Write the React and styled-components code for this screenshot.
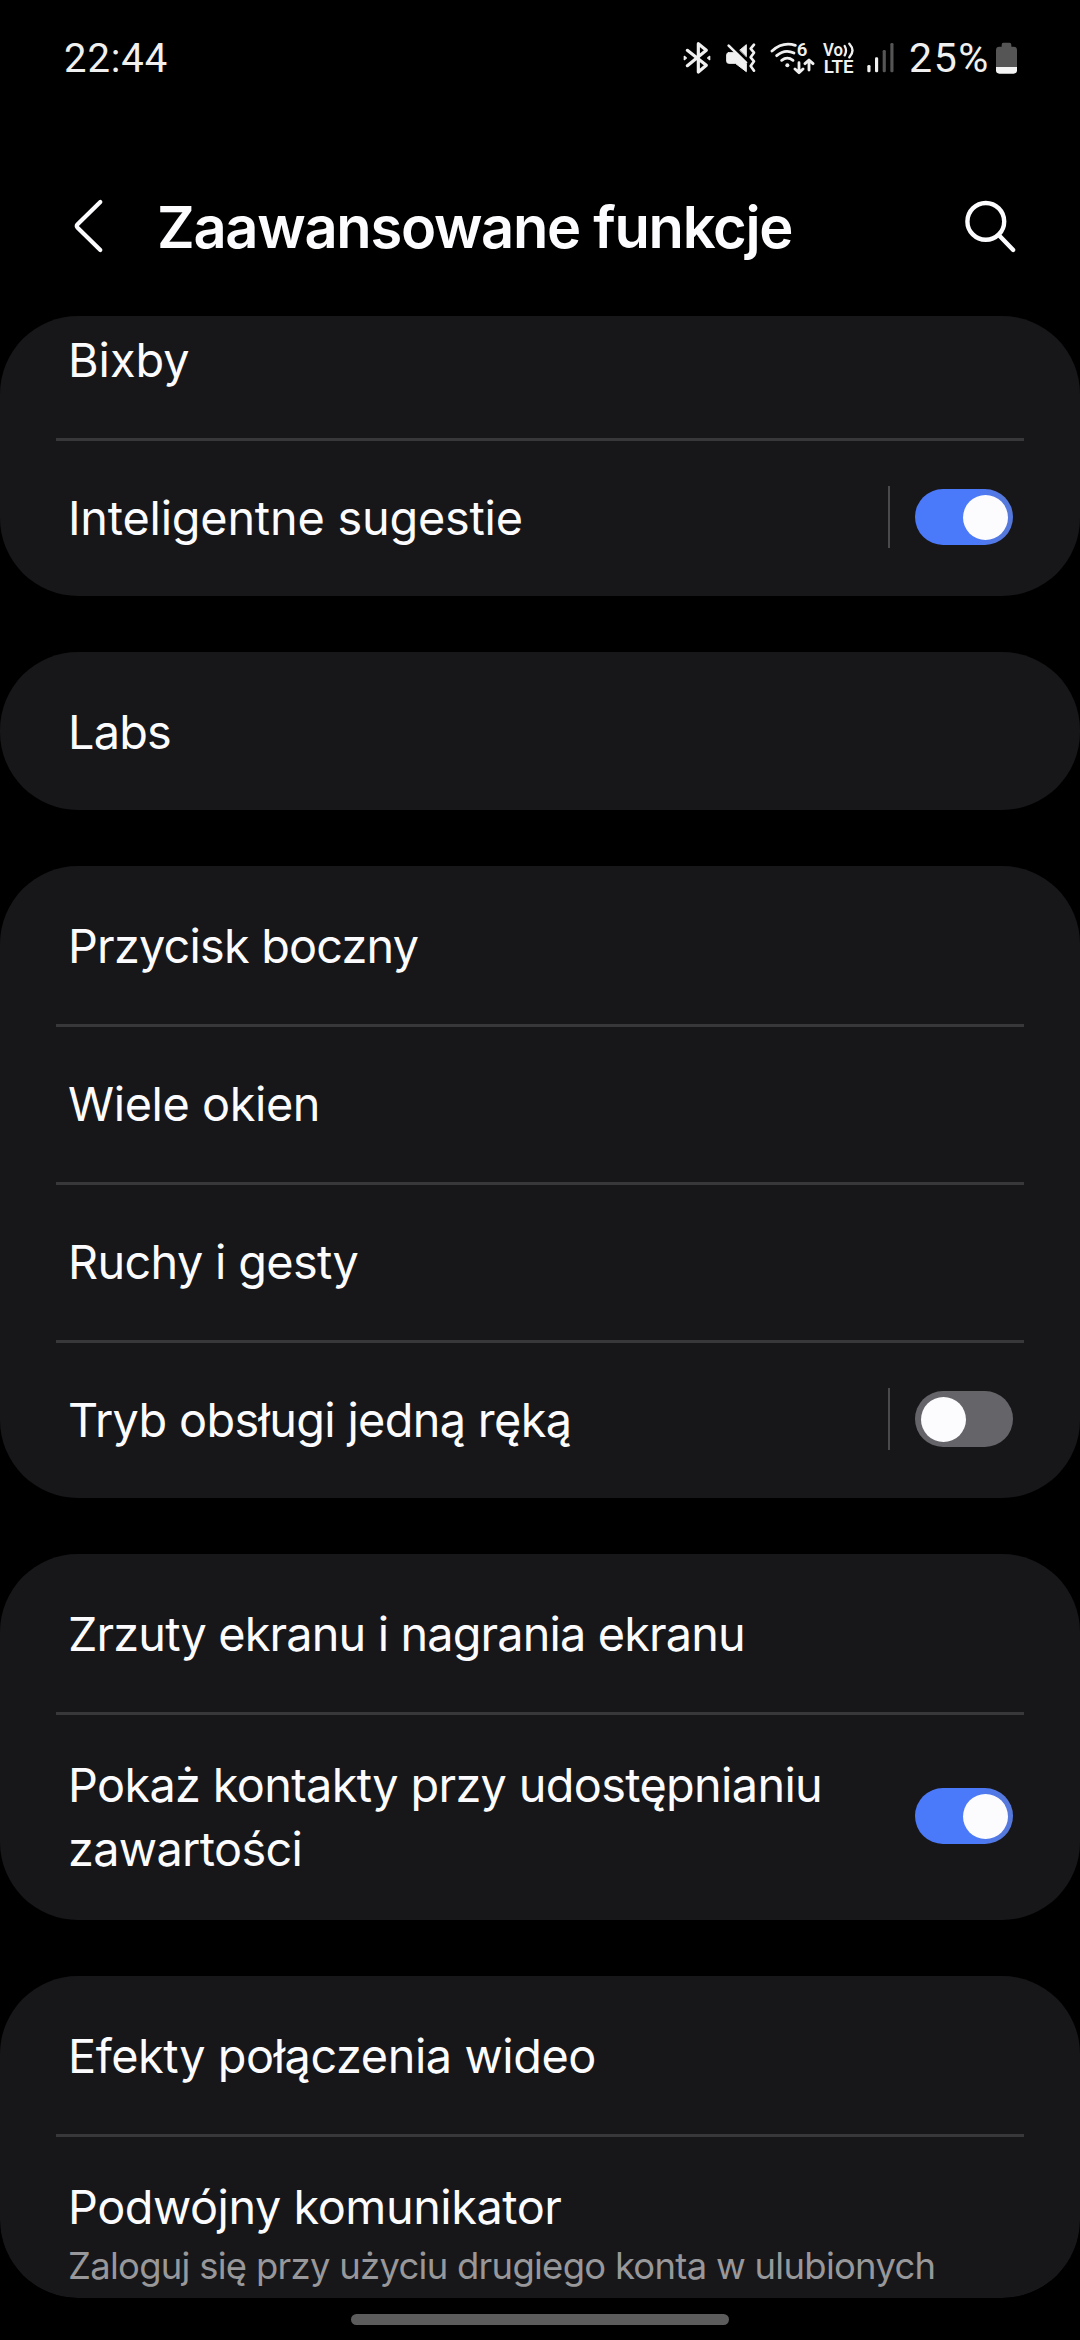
import React, { useState } from 'react';
import styled, { createGlobalStyle } from 'styled-components';

const GlobalStyle = createGlobalStyle`
	* {
		box-sizing: border-box;
	}
	body {
		margin: 0;
		background: #000;
	}
`;

const Screen = styled.div`
	display: flex;
	flex-direction: column;
	width: 1080px;
	height: 2340px;
	overflow: hidden;
	background: #000;
	color: #fcfcff;
	font-family: Inter, 'Liberation Sans', sans-serif;
`;

const StatusBar = styled.div`
	display: flex;
	align-items: center;
	justify-content: space-between;
	height: 116px;
	padding: 0 62px 0 64px;
	color: #f0f0f0;
	font-family: Roboto, 'Liberation Sans', sans-serif;
`;

const Clock = styled.div`
	font-size: 40px;
	letter-spacing: 0.9px;
`;

const StatusIcons = styled.div`
	display: flex;
	align-items: center;

	svg {
		display: block;
		height: 36px;
	}
`;

const BatteryText = styled.div`
	margin: 0 6px 0 15px;
	width: 80px;
	font-size: 41px;
	letter-spacing: 1.6px;
	white-space: nowrap;
`;

const Gap = styled.span`
	width: ${(props) => props.$size}px;
`;

const Header = styled.header`
	display: flex;
	align-items: center;
	height: 200px;
	padding: 20px 60px 0 70px;
`;

const Title = styled.h1`
	flex: 1;
	margin: 0;
	padding: 2px 0 0 51px;
	font-size: 57.8px;
	font-weight: 600;
	line-height: 76px;
	letter-spacing: -1.27px;
	white-space: nowrap;
`;

const IconButton = styled.button`
	display: flex;
	padding: 0;
	border: none;
	background: none;
	color: inherit;
`;

const List = styled.main`
	display: flex;
	flex-direction: column;
	gap: 56px;
	height: 1982px;
	border-radius: 0 0 78px 78px;
	overflow: hidden;
`;

const Card = styled.section`
	flex-shrink: 0;
	height: ${(props) => (props.$height ? `${props.$height}px` : 'auto')};
	padding: 0 56px;
	border-radius: 78px;
	background: #17171a;
	overflow: hidden;
`;

const Row = styled.div`
	display: flex;
	align-items: ${(props) => (props.$top ? 'flex-start' : 'center')};
	height: ${(props) => props.$height || 158}px;
	margin-top: ${(props) => props.$scrolled || 0}px;
	padding: ${(props) => (props.$top ? '36px 11px 0 12px' : '0 11px 3px 12px')};
	border-top: 3px solid transparent;

	& + & {
		border-top-color: #38383b;
	}
`;

const Labels = styled.div`
	flex: 1;
	padding-top: 2px;
`;

const Label = styled.div`
	font-size: 46.8px;
	line-height: 64px;
	letter-spacing: ${(props) => props.$tracking || 0}px;
	white-space: pre-line;
`;

const Summary = styled.div`
	margin-top: 3px;
	color: #98989b;
	font-size: 36.4px;
	line-height: 48px;
	letter-spacing: -0.7px;
	white-space: nowrap;
`;

const Separator = styled.div`
	width: 2px;
	height: 62px;
	margin-right: 25px;
	background: #4a4a4d;
`;

const Track = styled.button`
	display: flex;
	align-items: center;
	justify-content: ${(props) => (props.$on ? 'flex-end' : 'flex-start')};
	width: 98px;
	height: 56px;
	padding: 0 5.5px;
	border: none;
	border-radius: 28px;
	background: ${(props) => (props.$on ? 'linear-gradient(90deg, #4a79fa 60%, #5578dc 90%)' : '#656569')};
`;

const Thumb = styled.span`
	width: 45px;
	height: 45px;
	border-radius: 50%;
	background: #fcfcff;
`;

const NavHandle = styled.div`
	width: 378px;
	height: 11px;
	margin: 16px auto 0;
	border-radius: 6px;
	background: #5c5c5c;
`;

const BluetoothIcon = () => (
	<svg viewBox="66 60 90 108" width="30" fill="none" stroke="currentColor" strokeWidth="9.5" strokeLinecap="round" strokeLinejoin="round">
		<path d="M82 91 L139 136 L115 156 V71 L139 91 L82 137" />
		<path d="M73 109 L79 114 L73 119 Z M149 109 L143 114 L149 119 Z" fill="currentColor" strokeWidth="4" />
	</svg>
);

const VibrateIcon = () => (
	<svg viewBox="192 60 99 108" width="33" fill="currentColor" stroke="currentColor" strokeLinecap="round" strokeLinejoin="round">
		<path d="M206 77 L258 128" fill="none" strokeWidth="8" />
		<path d="M240 90 L259 74 V109 Z" strokeWidth="3" />
		<path d="M206 98 H224 L259 132 V155 L226 130 H206 Q200 130 200 124 V104 Q200 98 206 98 Z" strokeWidth="3" />
		<path d="M282 74 L272 86 L282 98 L272 112 L282 124 L272 138 L282 152" fill="none" strokeWidth="8" />
	</svg>
);

const WifiIcon = () => (
	<svg viewBox="330 60 135 108" width="45" fill="none" stroke="currentColor" strokeWidth="8.5" strokeLinecap="round">
		<path d="M336 93 Q368 64 406 76" />
		<path d="M350 107 Q374 86 402 99" />
		<path d="M365 121 Q382 108 399 121" />
		<circle cx="382" cy="136" r="6" fill="currentColor" stroke="none" />
		<path d="M417 128 V157 M405 147 L417 158 L429 147 M447 150 V121 M435 131 L447 120 L459 131" strokeLinejoin="round" />
		<text x="410" y="108" fill="currentColor" stroke="none" fontSize="56" fontWeight="600">
			6
		</text>
	</svg>
);

const VolteIcon = () => (
	<svg viewBox="486 60 99 108" width="33" fill="currentColor">
		<text x="489" y="107" fontSize="53" fontWeight="600" textLength="60" lengthAdjust="spacingAndGlyphs">
			Vo
		</text>
		<text x="491" y="159" fontSize="53" fontWeight="600" textLength="90" lengthAdjust="spacingAndGlyphs">
			LTE
		</text>
		<path
			d="M554 78 Q562 92 554 106 M568 71 Q587 92 568 112"
			fill="none"
			stroke="currentColor"
			strokeWidth="7"
			strokeLinecap="round"
		/>
	</svg>
);

const SignalIcon = () => (
	<svg viewBox="621 60 81 108" width="27" fill="currentColor">
		<rect x="622" y="135" width="9.5" height="22" rx="4" />
		<rect x="645" y="112" width="9.5" height="45" rx="4" />
		<rect x="668" y="90" width="9.5" height="67" rx="4" fill="#555" />
		<rect x="691" y="69" width="9.5" height="88" rx="4" fill="#555" />
	</svg>
);

const BatteryIcon = () => (
	<svg viewBox="1005 60 69 108" width="23">
		<path
			d="M1030 68 H1048 Q1054 68 1054 74 V80 H1061 Q1071 80 1071 90 V141 H1008 V90 Q1008 80 1018 80 H1025 V74 Q1025 68 1030 68 Z"
			fill="#555"
		/>
		<path d="M1008 141 H1071 V151 Q1071 161 1061 161 H1018 Q1008 161 1008 151 Z" fill="#f4f4f4" />
	</svg>
);

const BackIcon = () => (
	<svg width="36" height="56" viewBox="0 0 36 56" fill="none" stroke="currentColor" strokeWidth="4.2" strokeLinecap="round" strokeLinejoin="round">
		<path d="M30.3 4 L7.6 26.3 Q6 28 7.6 29.7 L30.3 52" />
	</svg>
);

const SearchIcon = () => (
	<svg width="56" height="56" viewBox="0 0 56 56" fill="none" stroke="currentColor" strokeWidth="4.4" strokeLinecap="round">
		<circle cx="21.8" cy="23.4" r="18.4" />
		<path d="M35.2 37.5 L49.2 52" />
	</svg>
);

const groups = [
	{
		rows: [
			{ label: 'Bixby', scrolled: -36 },
			{ label: 'Inteligentne sugestie', tracking: -0.2, toggle: true, split: true },
		],
	},
	{ rows: [{ label: 'Labs', tracking: -0.8 }] },
	{
		rows: [
			{ label: 'Przycisk boczny', tracking: -0.8 },
			{ label: 'Wiele okien', tracking: -0.4 },
			{ label: 'Ruchy i gesty', tracking: -0.65 },
			{ label: 'Tryb obsługi jedną ręką', tracking: -0.65 },
		],
	},
	{
		rows: [
			{ label: 'Zrzuty ekranu i nagrania ekranu', tracking: -0.85 },
			{ label: 'Pokaż kontakty przy udostępnianiu\nzawartości', tracking: -0.65, toggle: true, height: 208 },
		],
	},
	{
		//last card is cut by the navigation area
		height: 322,
		rows: [
			{ label: 'Efekty połączenia wideo', tracking: -0.42 },
			{
				label: 'Podwójny komunikator',
				tracking: -0.45,
				summary: 'Zaloguj się przy użyciu drugiego konta w ulubionych',
				height: 220,
			},
		],
	},
];

//one-handed mode starts switched off
groups[2].rows[3].toggle = false;
groups[2].rows[3].split = true;

const Switch = ({ initial }) => {
	const [on, setOn] = useState(initial);
	return (
		<Track $on={on} role="switch" aria-checked={on} onClick={() => setOn(!on)}>
			<Thumb />
		</Track>
	);
};

const SettingRow = ({ label, summary, tracking, toggle, split, height, scrolled }) => (
	<Row $height={height} $scrolled={scrolled} $top={Boolean(summary)}>
		<Labels>
			<Label $tracking={tracking}>{label}</Label>
			{summary && <Summary>{summary}</Summary>}
		</Labels>
		{split && <Separator />}
		{toggle !== undefined && <Switch initial={toggle} />}
	</Row>
);

const App = () => {
	return (
		<Screen>
			<GlobalStyle />
			<StatusBar>
				<Clock>22:44</Clock>
				<StatusIcons>
					<BluetoothIcon />
					<Gap $size={12} />
					<VibrateIcon />
					<Gap $size={13} />
					<WifiIcon />
					<Gap $size={7} />
					<VolteIcon />
					<Gap $size={12} />
					<SignalIcon />
					<BatteryText>25%</BatteryText>
					<BatteryIcon />
				</StatusIcons>
			</StatusBar>
			<Header>
				<IconButton aria-label="Wstecz">
					<BackIcon />
				</IconButton>
				<Title>Zaawansowane funkcje</Title>
				<IconButton aria-label="Szukaj">
					<SearchIcon />
				</IconButton>
			</Header>
			<List>
				{groups.map((group) => (
					<Card key={group.rows[0].label} $height={group.height}>
						{group.rows.map((row) => (
							<SettingRow key={row.label} {...row} />
						))}
					</Card>
				))}
			</List>
			<NavHandle />
		</Screen>
	);
};

export default App;
